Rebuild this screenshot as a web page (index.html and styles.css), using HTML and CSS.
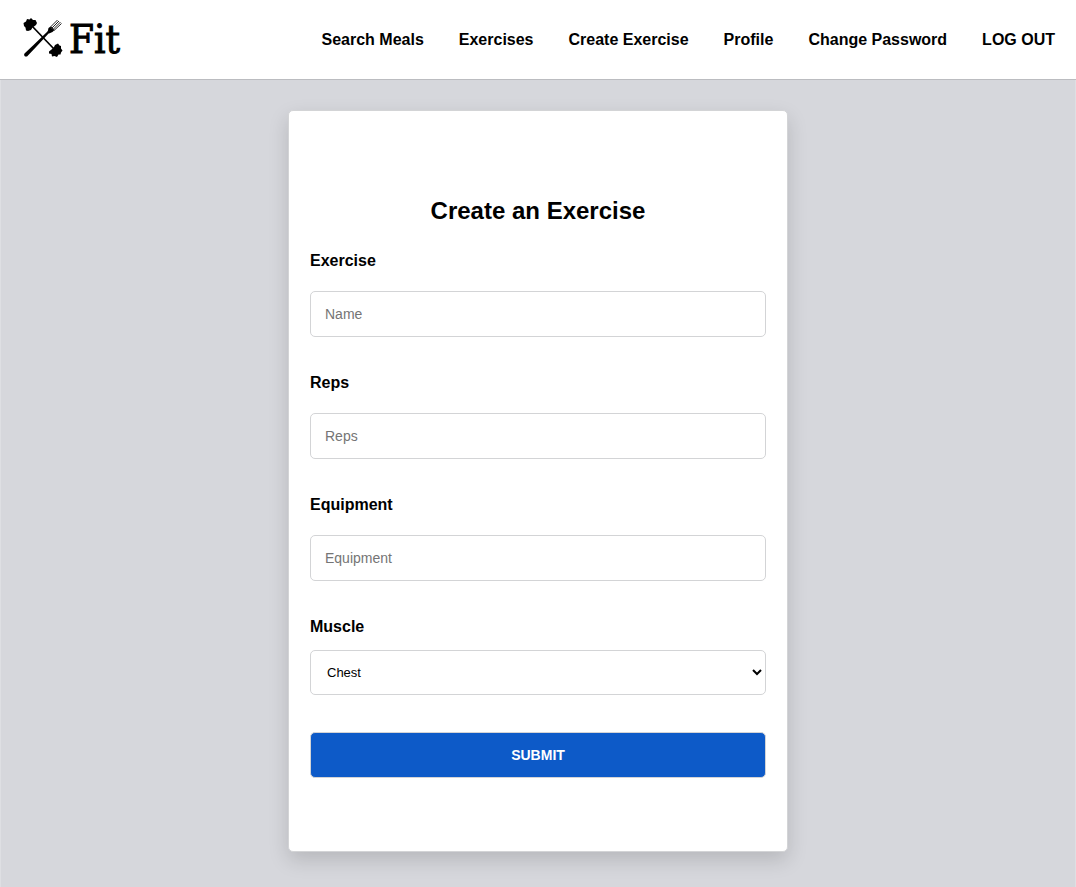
FILE: index.html
```html
<!DOCTYPE html>
<html lang="en">
<head>
<meta charset="utf-8">
<title>Fit - Create an Exercise</title>
<link rel="stylesheet" href="styles.css">
</head>
<body>
<header class="header">
  <a class="logo" href="#" aria-label="Fit">
    <svg class="logo-icon" viewBox="0 0 40 40" aria-hidden="true">
      <path d="M8 7 32 32" stroke="#000" stroke-width="1.7"/>
      <path d="M0.500 5 3 3.500 4 1 6.500 1.500 8 0 10 2 12.500 2 14 5 13 7 11 8.500 9.500 9.500 8 12 5 13 3 12.500 2.500 9.500 1 8Z"/>
      <path d="M26 33.500 28.500 31.500 31 29 32 27 35 25.500 36.500 27.500 38 28 38 30.500 39.500 32.500 38 34.500 37.500 36.500 35.500 36.500 34 39 31.500 38 29 38.500 28.500 36 26 35.500Z"/>
      <path d="M1.500 35.500 10 27.500 25 13 26.500 14.500 13.500 28.500 4 38.500 2 38.500 1 37Z"/>
      <path d="M24.500 14.500 25.500 10 28 8.500 31.500 12 29.500 14 26 15.500Z"/>
      <path d="M26.500 10 34.500 2M28 11 36 3M29.500 12 37.500 4M31 12.500 38.500 5.500" fill="none" stroke="#222" stroke-width="1"/>
    </svg>
    <span class="logo-text">Fit</span>
  </a>
  <nav class="nav">
    <a href="#">Search Meals</a>
    <a href="#">Exercises</a>
    <a href="#">Create Exercise</a>
    <a href="#">Profile</a>
    <a href="#">Change Password</a>
    <a href="#">LOG OUT</a>
  </nav>
</header>
<main class="main">
  <form class="card">
    <h1 class="title">Create an Exercise</h1>
    <div class="field">
      <label for="name">Exercise</label>
      <input class="control" id="name" type="text" placeholder="Name">
    </div>
    <div class="field">
      <label for="reps">Reps</label>
      <input class="control" id="reps" type="text" placeholder="Reps">
    </div>
    <div class="field">
      <label for="equipment">Equipment</label>
      <input class="control" id="equipment" type="text" placeholder="Equipment">
    </div>
    <div class="field field-select">
      <label for="muscle">Muscle</label>
      <select class="control select" id="muscle">
        <option>Chest</option>
        <option>Back</option>
        <option>Legs</option>
      </select>
    </div>
    <button class="submit" type="submit">SUBMIT</button>
  </form>
</main>
</body>
</html>
```

FILE: styles.css
```css
* {
  box-sizing: border-box;
}

body {
  margin: 0;
  min-height: 100vh;
  display: flex;
  flex-direction: column;
  background: #d6d7dc;
  color: #000;
  font-family: Helvetica, "Liberation Sans", Arial, sans-serif;
  font-size: 16px;
  line-height: 20px;
}

.header {
  display: flex;
  align-items: center;
  justify-content: space-between;
  min-height: 80px;
  padding: 0 21px 0 23px;
  background: #fff;
  border-bottom: 1px solid #bbbcc0;
}

.logo {
  display: flex;
  align-items: center;
  gap: 6px;
  padding-bottom: 3px;
  color: #000;
  text-decoration: none;
}

.logo-icon {
  width: 40px;
  height: 40px;
}

.logo-text {
  font-family: "DejaVu Serif Condensed", "DejaVu Serif", serif;
  font-size: 40px;
  line-height: 40px;
  padding-top: 2px;
  -webkit-text-stroke: 1px #000;
}

.nav {
  display: flex;
  gap: 35px;
}

.nav a {
  color: #000;
  font-weight: bold;
  text-decoration: none;
}

.main {
  flex: 1;
  padding: 30px 20px;
  border: solid #dedfe3;
  border-width: 0 1px;
}

.card {
  max-width: 500px;
  margin: 0 auto;
  padding: 86px 21px 73px;
  background: #fff;
  border: 1px solid #d3d4d6;
  border-radius: 5px;
  box-shadow: 0 8px 20px rgba(0, 0, 0, 0.15);
}

.title {
  margin: 0 0 26px;
  font-size: 24px;
  line-height: 28px;
  text-align: center;
}

.field {
  display: flex;
  flex-direction: column;
  gap: 20px;
  margin-bottom: 36px;
}

.field label {
  font-weight: bold;
}

.field-select {
  gap: 13px;
  margin-bottom: 37px;
}

.control {
  width: 100%;
  height: 46px;
  padding: 0 14px;
  background: #fff;
  border: 1px solid #d3d4d6;
  border-radius: 5px;
  color: #000;
  font-family: inherit;
  font-size: 14px;
}

.control::placeholder {
  color: #757575;
}

.select {
  height: 45px;
  padding: 0 0 0 12px;
  font-size: 13px;
}

.submit {
  display: block;
  width: 100%;
  height: 46px;
  background: #0d5ac8;
  border: 1px solid #d3d4d6;
  border-radius: 5px;
  color: #fff;
  font-family: inherit;
  font-size: 14px;
  font-weight: bold;
}
```
